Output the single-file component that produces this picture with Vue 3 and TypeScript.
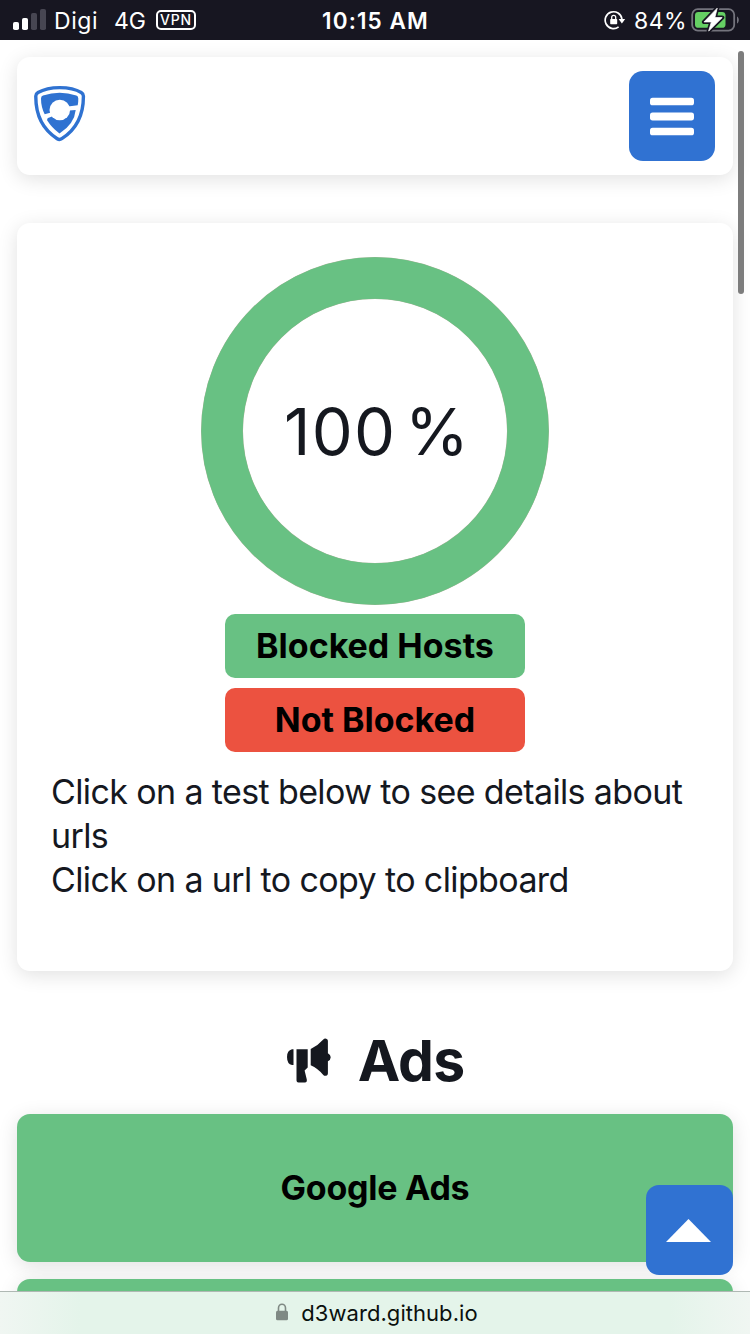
<script setup lang="ts">
interface LegendItem {
  label: string
  kind: 'good' | 'bad'
}

const legend: LegendItem[] = [
  { label: 'Blocked Hosts', kind: 'good' },
  { label: 'Not Blocked', kind: 'bad' },
]
const hints: string[] = [
  'Click on a test below to see details about urls',
  'Click on a url to copy to clipboard',
]
</script>

<template>
  <div class="screen">
    <header class="status">
      <div class="status-left">
        <svg class="signal" width="33" height="22" viewBox="0 0 33 22">
          <rect x="0" y="13" width="6" height="8" rx="1.8" fill="#fff" />
          <rect x="9" y="9" width="6" height="12" rx="1.8" fill="#fff" />
          <rect x="18" y="4" width="6" height="17" rx="1.8" fill="#474652" />
          <rect x="27" y="0" width="6" height="21" rx="1.8" fill="#474652" />
        </svg>
        <span class="carrier">Digi</span>
        <span class="network">4G</span>
        <span class="vpn">VPN</span>
      </div>
      <div class="clock">10:15 AM</div>
      <div class="status-right">
        <svg class="rotation" width="22" height="20" viewBox="0 0 22 20">
          <path d="M14.600 16.900A8.400 8.400 0 1 1 17.900 9" fill="none" stroke="#fff" stroke-width="1.700" />
          <path d="M14.600 9h6.600l-3.300 4.400z" fill="#fff" />
          <rect x="6.200" y="9" width="7" height="5.300" rx=".7" fill="#fff" />
          <path d="M7.700 9.200V7.300a2 2 0 0 1 4 0v1.900" fill="none" stroke="#fff" stroke-width="1.300" />
        </svg>
        <span class="percent">84%</span>
        <svg class="battery" width="49" height="26" viewBox="0 0 49 26">
          <rect x="1.200" y="2.200" width="42" height="21.400" rx="5.600" fill="none" stroke="#74747d" stroke-width="1.800" />
          <path d="M46 9.500c2.400 1.200 2.400 5.800 0 7z" fill="#74747d" />
          <rect x="4" y="5" width="30.500" height="15.800" rx="3.400" fill="#65cf63" />
          <path d="M26.200 1.200 13 14.900h7.400L17.700 24 31.200 10.600h-7.400z" fill="#fff" stroke="#171621" stroke-width="4.200" stroke-linejoin="round" />
          <path d="M26.200 1.200 13 14.900h7.400L17.700 24 31.200 10.600h-7.400z" fill="#fff" stroke="#fff" stroke-width=".8" stroke-linejoin="round" />
        </svg>
      </div>
    </header>

    <main class="page">
      <nav class="card navbar">
        <svg class="logo" width="52" height="57" viewBox="0 0 52 57">
          <path d="M25.700 2.600C18 2.600 9.500 4.300 4 7.500Q1.800 8.800 1.800 11C1.600 30 8 44 23.200 53.700Q25.500 55.200 27.800 53.700C43 44 49.600 30 49.400 11Q49.400 8.800 47.200 7.500C42 4.300 33.500 2.600 25.700 2.600Z" fill="#fff" stroke="#2f72d1" stroke-width="3.400" />
          <path d="M7 13.500Q7 11.300 9 10.600Q25.700 5 42.300 10.600Q44.300 11.300 44.300 13.500Q44.400 17 43.700 20.200L34 21.500L17 27.500L10.700 29.300Q7 22 7 13.500Z" fill="#2f72d1" />
          <path d="M14 33 18 31.400L35 25.600L41.700 24.900Q40.500 38.500 25.500 48.500Q17.500 42.500 13.300 35.500Q12.700 33.700 14 33Z" fill="#2f72d1" />
          <circle cx="25.800" cy="25" r="10.300" fill="#fff" />
        </svg>
        <button class="menu" aria-label="Menu">
          <svg width="44" height="39" viewBox="0 0 44 39">
            <g fill="#fff">
              <rect y=".7" width="44" height="7.600" rx="2.600" />
              <rect y="15.600" width="44" height="7.800" rx="2.600" />
              <rect y="30.700" width="44" height="7.600" rx="2.600" />
            </g>
          </svg>
        </button>
      </nav>

      <section class="card summary">
        <div class="chart">
          <svg class="ring" width="348" height="348" viewBox="0 0 348 348">
            <circle cx="174" cy="174" r="153" fill="none" stroke="#a9b398" stroke-width="42" />
            <circle cx="174" cy="174" r="153" fill="none" stroke="#68c183" stroke-width="41.400" />
          </svg>
          <span class="score">100 %</span>
        </div>
        <div class="legend">
          <div v-for="item in legend" :key="item.label" class="tag" :class="item.kind">
            {{ item.label }}
          </div>
        </div>
        <div class="hints">
          <p v-for="hint in hints" :key="hint">{{ hint }}</p>
        </div>
      </section>

      <h2 class="heading">
        <svg class="horn" width="44" height="45" viewBox="0 0 44 45">
          <g fill="#15181f">
            <path d="M6.500 11.300V27H5Q0 26 0 19Q0 12.500 5 11.300Z" />
            <path d="M9.500 11.300H20.700V29.500L17.600 32.500L19.800 41.500Q20.200 44.400 18 44.400H11.500Q9.500 44.400 9.500 42.500Z" />
            <path d="M23.700 11.100Q31 7.500 36.300 1.500Q37.500 .2 39.200 .7Q40.900 1.100 40.900 2.800V15.200Q43.700 16.500 43.700 19.200T40.900 23.200V35.600Q40.900 37.300 39.200 37.700Q37.500 38.200 36.300 36.900Q31 30.500 23.700 27.200Z" />
          </g>
        </svg>
        <span>Ads</span>
      </h2>

      <div class="tests">
        <div class="test"><span>Google Ads</span></div>
        <div class="test"></div>
      </div>
    </main>

    <div class="scrollbar"></div>
    <button class="to-top" aria-label="Back to top">
      <svg width="45" height="23" viewBox="0 0 45 23"><path d="M22.500 0 45 23H0Z" fill="#fff" /></svg>
    </button>
    <footer class="address">
      <svg width="12" height="18" viewBox="0 0 12 18">
        <path d="M2.500 8.500V5a3.500 3.700 0 0 1 7 0v3.500" fill="none" stroke="#7f8984" stroke-width="1.600" />
        <rect y="7.700" width="12" height="9.600" rx="1.500" fill="#7f8984" />
      </svg>
      <span class="domain">d3ward.github.io</span>
    </footer>
  </div>
</template>

<style>
html,
body {
  margin: 0;
  background: #fff;
  overflow: hidden;
}
</style>

<style scoped>
.screen {
  position: relative;
  width: 750px;
  height: 1334px;
  overflow: hidden;
  background: #fff;
  color: #15181f;
  font-family: Inter, 'Liberation Sans', sans-serif;
}
svg {
  display: block;
  flex: none;
}
button {
  border: 0;
  padding: 0;
  display: flex;
  align-items: center;
  justify-content: center;
  background: #3072d2;
}
.status {
  box-sizing: border-box;
  height: 40px;
  padding: 0 10px 0 13px;
  display: grid;
  grid-template-columns: 1fr auto 1fr;
  align-items: center;
  background: #171621;
  color: #fff;
  font-size: 23px;
  line-height: 40px;
  white-space: nowrap;
}
.status-left,
.status-right {
  display: flex;
  align-items: center;
}
.status-right {
  justify-content: flex-end;
}
.signal {
  margin-right: 8px;
}
.carrier,
.network,
.clock,
.percent {
  padding-top: 2px;
  line-height: 38px;
}
.carrier {
  width: 60px;
  letter-spacing: 0.6px;
}
.network {
  width: 42px;
}
.vpn {
  box-sizing: border-box;
  width: 40px;
  height: 20px;
  border: 2px solid #fff;
  border-radius: 5px;
  font-size: 14px;
  font-weight: 500;
  line-height: 16.5px;
  text-align: center;
  letter-spacing: 0.8px;
}
.clock {
  padding-right: 2px;
  font-weight: 600;
  font-size: 22.5px;
  letter-spacing: 1.1px;
}
.rotation {
  margin-right: 8px;
}
.percent {
  width: 57px;
  letter-spacing: 0.4px;
}
.page {
  padding: 17px 17px 0;
}
.card {
  box-sizing: border-box;
  border-radius: 13px;
  background: #fff;
  box-shadow: 0 4px 20px rgba(0, 0, 0, 0.12);
}
.navbar {
  height: 118px;
  padding: 14px 18px 0 17px;
  display: flex;
  justify-content: space-between;
}
.logo {
  margin-top: 14px;
}
.menu {
  width: 86px;
  height: 90px;
  border-radius: 14px;
}
.summary {
  height: 748px;
  margin-top: 48px;
  padding: 34px 35px 0;
}
.chart {
  display: grid;
  place-items: center;
}
.chart > * {
  grid-area: 1 / 1;
}
.score {
  padding: 2px 0 0 4px;
  font-size: 65px;
  line-height: 80px;
  letter-spacing: 1.3px;
  word-spacing: -11px;
}
.legend {
  margin-top: 9px;
  display: flex;
  flex-direction: column;
  align-items: center;
  gap: 10px;
}
.tag {
  width: 300px;
  height: 64px;
  border-radius: 10px;
  text-align: center;
  color: #000;
  font-size: 34px;
  font-weight: 700;
  line-height: 64px;
}
.good {
  background: #68c183;
}
.bad {
  background: #ec5240;
}
.hints {
  margin: 18px -10px 0 -1px;
  font-size: 34px;
  line-height: 44px;
  letter-spacing: -0.62px;
}
.hints p {
  margin: 0;
}
.heading {
  height: 60px;
  margin: 60px 0 0;
  padding-left: 1px;
  display: flex;
  justify-content: center;
  gap: 27px;
  font-size: 57px;
  font-weight: 700;
  line-height: 60px;
  letter-spacing: -0.8px;
}
.horn {
  margin-top: 7px;
}
.tests {
  margin-top: 23px;
  display: flex;
  flex-direction: column;
  gap: 17px;
}
.test {
  height: 148px;
  border-radius: 13px;
  background: #68c183;
  box-shadow: 0 4px 20px rgba(0, 0, 0, 0.12);
  text-align: center;
  color: #000;
  font-size: 34px;
  font-weight: 700;
  line-height: 148px;
  letter-spacing: -0.25px;
}
.scrollbar {
  position: absolute;
  top: 51px;
  right: 6px;
  width: 6px;
  height: 243px;
  border-radius: 3px;
  background: #7d7d7d;
}
.to-top {
  position: absolute;
  top: 1185px;
  left: 646px;
  width: 87px;
  height: 90px;
  padding-right: 2px;
  border-radius: 13px;
}
.address {
  position: absolute;
  inset: 1291px 0 0;
  box-sizing: border-box;
  padding-left: 4px;
  border-top: 1px solid #afb8b3;
  display: flex;
  align-items: center;
  justify-content: center;
  gap: 13px;
  background: linear-gradient(90deg, #f0f6f2 0, #e4f4ea 80px, #e4f4ea 670px, #f0f6f2 750px);
  color: #0a100d;
  font-size: 22px;
  line-height: 42px;
}
.address svg {
  margin-top: -2px;
}
.domain {
  letter-spacing: 0.05px;
}
</style>
